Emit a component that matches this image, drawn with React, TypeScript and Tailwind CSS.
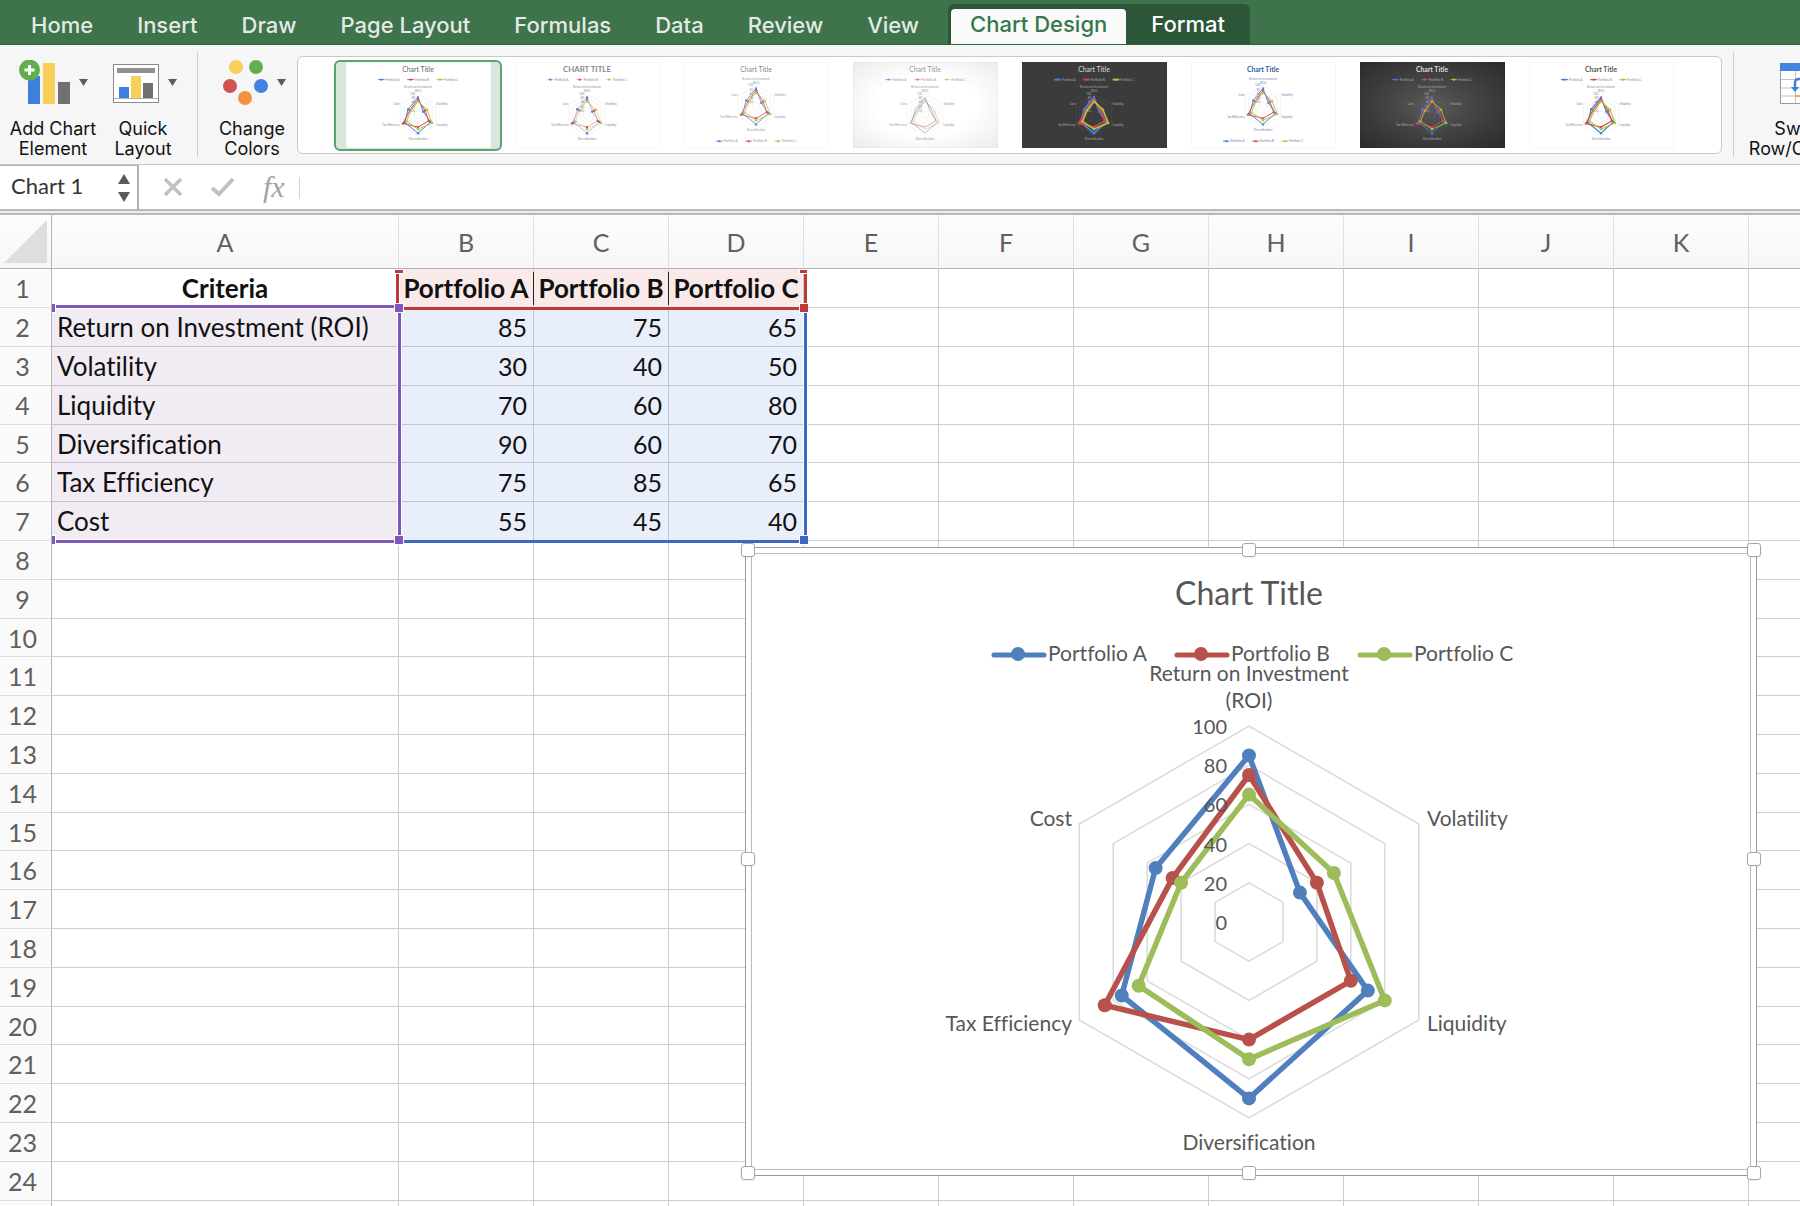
import { clsx } from 'clsx';

const TABS = ['Home', 'Insert', 'Draw', 'Page Layout', 'Formulas', 'Data', 'Review', 'View'];

const COLUMNS = ['A', 'B', 'C', 'D', 'E', 'F', 'G', 'H', 'I', 'J', 'K'];

const ROWS = Array.from({ length: 25 }, (_, i) => i + 1);

const SHEET: string[][] = [
  ['Criteria', 'Portfolio A', 'Portfolio B', 'Portfolio C'],
  ['Return on Investment (ROI)', '85', '75', '65'],
  ['Volatility', '30', '40', '50'],
  ['Liquidity', '70', '60', '80'],
  ['Diversification', '90', '60', '70'],
  ['Tax Efficiency', '75', '85', '65'],
  ['Cost', '55', '45', '40'],
];

const SERIES = [0, 1, 2].map((n) => ({
  name: SHEET[0][n + 1],
  color: ['#4f80bd', '#b8504b', '#9dbc5a'][n],
  values: SHEET.slice(1).map((row) => Number(row[n + 1])),
}));

// Points of a radar polygon, first axis straight up, then clockwise
const radarPoints = (values: number[], cx: number, cy: number, r: number) =>
  values.map((v, i) => {
    const angle = (Math.PI * 2 * i) / values.length;
    return [cx + (Math.sin(angle) * r * v) / 100, cy - (Math.cos(angle) * r * v) / 100];
  });

const toPath = (points: number[][]) => points.map((p) => p.join(',')).join(' ');

const ring = (level: number) => Array(6).fill(level) as number[];

const Caret = () => (
  <svg width="9" height="7" viewBox="0 0 9 7" className="shrink-0" aria-hidden="true">
    <path d="M0 0h9L4.500 7z" fill="#5c5c5c" />
  </svg>
);

const AddElementIcon = () => (
  <svg width="52" height="44" viewBox="0 0 52 44" aria-hidden="true">
    <rect x="9" y="16" width="12" height="28" fill="#3d80dc" />
    <rect x="24" y="3" width="12" height="41" fill="#f8cf58" />
    <rect x="39" y="22" width="12" height="22" fill="#707070" />
    <circle cx="10.500" cy="10" r="10.500" fill="#61ae4f" />
    <path d="M10.500 5v10M5.500 10h10" stroke="#fff" strokeWidth="3" />
  </svg>
);

const QuickLayoutIcon = () => (
  <svg width="47" height="44" viewBox="0 0 47 44" className="ml-1" aria-hidden="true">
    <rect x="0.500" y="4.500" width="45" height="38" fill="#fff" stroke="#8a8a8a" />
    <rect x="4" y="8" width="38" height="5" fill="#909090" />
    <path d="M1 38.500h44" stroke="#b0b0b0" />
    <rect x="6" y="27" width="10" height="11" fill="#3d80dc" />
    <rect x="18" y="16" width="10" height="22" fill="#f8cf58" />
    <rect x="30" y="23" width="10" height="15" fill="#707070" />
  </svg>
);

const ChangeColorsIcon = () => (
  <svg width="46" height="46" viewBox="0 0 46 46" className="ml-1" aria-hidden="true">
    <circle cx="13" cy="8" r="7" fill="#f8cf58" />
    <circle cx="33" cy="8" r="7" fill="#61ae4f" />
    <circle cx="7" cy="27" r="7" fill="#d35151" />
    <circle cx="38" cy="27" r="7" fill="#4384e0" />
    <circle cx="22" cy="39" r="7" fill="#f49141" />
  </svg>
);

const SwitchIcon = () => (
  <svg width="46" height="44" viewBox="0 0 46 44" aria-hidden="true">
    <rect x="0.500" y="3.500" width="45" height="40" fill="#fff" stroke="#9a9a9a" />
    <path d="M1 19.500h44M1 28h44M1 36h44M15.500 11v32M30.500 11v32" stroke="#c4c4c4" />
    <rect x="0" y="3" width="46" height="8" fill="#4384e0" />
    <path d="M15 36h16" stroke="#f49141" strokeWidth="1.500" />
    <path d="M15 29V23q0-4 4-4h8" fill="none" stroke="#3d80dc" strokeWidth="2.500" />
    <path d="M11 27h8l-4 5z" fill="#3d80dc" />
  </svg>
);

type ThumbStyle = {
  id: number;
  title?: string;
  box: string;
  text: string;
  titleColor: string;
  bold?: boolean;
  legendBottom?: boolean;
  line: number;
  dots: boolean;
  opacity: number;
};

const BRIGHT = ['#3f7fe0', '#e04545', '#b5c23c'];

const THUMBS: ThumbStyle[] = [
  { id: 1, box: 'bg-white', text: '#8a8a8a', titleColor: '#666', line: 1, dots: true, opacity: 1 },
  { id: 2, title: 'CHART TITLE', box: 'bg-white', text: '#8a8a8a', titleColor: '#888', bold: true, line: 0.4, dots: true, opacity: 1 },
  { id: 3, box: 'bg-white', text: '#999', titleColor: '#888', legendBottom: true, line: 0.8, dots: true, opacity: 0.9 },
  { id: 4, box: 'bg-radial from-white from-50% to-[#ececec]', text: '#999', titleColor: '#999', line: 0.8, dots: false, opacity: 0.6 },
  { id: 5, box: 'bg-[#3b3b3b]', text: '#aaa', titleColor: '#ddd', line: 1.8, dots: true, opacity: 1 },
  { id: 6, box: 'bg-white', text: '#7085b3', titleColor: '#35599c', bold: true, legendBottom: true, line: 1, dots: true, opacity: 0.9 },
  { id: 7, box: 'bg-radial from-[#595959] to-[#2b2b2b]', text: '#aaa', titleColor: '#ddd', bold: true, line: 0.9, dots: true, opacity: 1 },
  { id: 8, box: 'bg-white', text: '#8a8a8a', titleColor: '#555', bold: true, line: 1.2, dots: true, opacity: 1 },
];

const Thumbnail = ({ style }: { style: ThumbStyle }) => {
  const shift = style.legendBottom ? -9 : 0;
  const cy = 53 + shift;
  const legendY = style.legendBottom ? 80 : 17;

  return (
    <svg
      width="145"
      height="86"
      viewBox="0 0 145 86"
      className={clsx('border border-black/3', style.box)}
      fontFamily="Lato, sans-serif"
      fontSize="4"
      fill={style.text}
      aria-hidden="true"
    >
      <text x="72" y="9" fontSize={style.title ? 8 : 7} textAnchor="middle" fill={style.titleColor} fontWeight={style.bold ? 700 : 400}>
        {style.title ?? 'Chart Title'}
      </text>
      {SERIES.map((s, i) => (
        <g key={s.name}>
          <path d={`M${31 + i * 30} ${legendY}h7`} stroke={BRIGHT[i]} strokeWidth={style.line} opacity={style.opacity} />
          <circle cx={34.5 + i * 30} cy={legendY} r="1.200" fill={BRIGHT[i]} opacity={style.opacity} />
          <text x={39 + i * 30} y={legendY + 1} fontSize="3">{s.name}</text>
        </g>
      ))}
      <text x="72" y={26 + shift} fontSize="3" textAnchor="middle">Return on Investment</text>
      <text x="72" y={30 + shift} fontSize="3" textAnchor="middle">(ROI)</text>
      <text x="53" y={43 + shift} fontSize="3" textAnchor="end">Cost</text>
      <text x="91" y={43 + shift} fontSize="3">Volatility</text>
      <text x="53" y={65 + shift} fontSize="3" textAnchor="end">Tax Efficiency</text>
      <text x="91" y={65 + shift} fontSize="3">Liquidity</text>
      <text x="72" y={79 + shift} fontSize="3" textAnchor="middle">Diversification</text>
      {[100, 80, 60, 40, 20].map((level) => (
        <g key={level}>
          <polygon points={toPath(radarPoints(ring(level), 72, cy, 21))} fill="none" stroke={style.text} strokeWidth="0.300" opacity="0.400" />
          <text x="69" y={cy + 1 - level * 0.21} textAnchor="end" fontSize="3">{level}</text>
        </g>
      ))}
      {SERIES.map((s, i) => {
        const points = radarPoints(s.values, 72, cy, 21);
        return (
          <g key={s.name} opacity={style.opacity}>
            <polygon points={toPath(points)} fill="none" stroke={BRIGHT[i]} strokeWidth={style.line} />
            {style.dots && points.map((p, n) => <circle key={n} cx={p[0]} cy={p[1]} r="1.200" fill={BRIGHT[i]} />)}
          </g>
        );
      })}
    </svg>
  );
};

const RibbonTabs = () => (
  <nav className="flex h-[45px] shrink-0 items-end overflow-hidden border-b border-[#316340] bg-[#3e734b] pl-[9px] text-[22px] font-medium leading-[38px] text-[#e3ebe4]">
    {TABS.map((tab) => (
      <button key={tab} type="button" className="px-[22px]">
        {tab}
      </button>
    ))}
    <div className="-mb-px ml-[7px] flex h-[41px] items-end rounded-t-md bg-[#2b5637] pl-[3px]">
      <button type="button" className="h-9 rounded-t-sm bg-[#fafafa] px-[19px] pb-[6px] leading-[30px] text-[#34784b]">
        Chart Design
      </button>
      <button type="button" className="h-9 px-[25px] pb-[6px] leading-[30px] text-white">
        Format
      </button>
    </div>
  </nav>
);

const ToolButton = ({ lines, icon, className }: { lines: string[]; icon: React.ReactNode; className?: string }) => (
  <button type="button" className={clsx('flex shrink-0 flex-col items-center gap-[15px] text-[18px] leading-5 text-[#111]', className)}>
    <span className="flex h-11 items-center gap-2">{icon}</span>
    <span>
      {lines[0]}
      <br />
      {lines[1]}
    </span>
  </button>
);

const Toolbar = () => (
  <div className="flex h-[120px] shrink-0 items-start overflow-hidden border-b border-[#c6c6c6] bg-[#f6f6f6] pl-2 pt-[15px]">
    <ToolButton className="w-[90px]" lines={['Add Chart', 'Element']} icon={<><AddElementIcon /><Caret /></>} />
    <ToolButton className="w-[90px]" lines={['Quick', 'Layout']} icon={<><QuickLayoutIcon /><Caret /></>} />
    <div className="-mt-2 mx-[9px] h-[105px] w-px shrink-0 bg-[#cfcfcf]" />
    <ToolButton className="w-[90px]" lines={['Change', 'Colors']} icon={<><ChangeColorsIcon /><Caret /></>} />
    <div className="-mt-1 flex h-[98px] min-w-0 flex-1 items-center gap-px overflow-hidden rounded-md border border-[#c9c9c9] bg-white pl-[36px]">
      {THUMBS.map((style, i) => (
        <button
          key={style.id}
          type="button"
          aria-label={`Chart style ${style.id}`}
          className={clsx(
            'flex h-[91px] w-[168px] shrink-0 items-center justify-center rounded-md border-2',
            i === 0 ? 'border-[#5aa26e] bg-[#d8e6dc]' : 'border-transparent',
          )}
        >
          <Thumbnail style={style} />
        </button>
      ))}
    </div>
    <div className="-mt-2 ml-[11px] h-[105px] w-px shrink-0 bg-[#cfcfcf]" />
    <div className="w-[66px] shrink-0 overflow-hidden pl-4">
      <ToolButton className="w-[106px]" lines={['Switch', 'Row/Column']} icon={<SwitchIcon />} />
    </div>
  </div>
);

const FormulaBar = () => (
  <div className="flex h-[44px] shrink-0 items-stretch bg-white">
    <div className="flex w-[139px] shrink-0 items-center border-r-2 border-t border-[#b0b0b0] pr-[7px]">
      <input
        aria-label="Name box"
        defaultValue="Chart 1"
        className="min-w-0 flex-1 bg-transparent pb-1 pl-[11px] font-[Lato,sans-serif] text-[22px] leading-7 text-[#333] outline-none"
      />
      <div className="flex flex-col gap-2">
        <button type="button" aria-label="Previous name">
          <svg width="12" height="10" viewBox="0 0 12 10" className="block"><path d="M6 0l6 10H0z" fill="#5a5a5a" /></svg>
        </button>
        <button type="button" aria-label="Next name">
          <svg width="12" height="10" viewBox="0 0 12 10" className="block"><path d="M0 0h12L6 10z" fill="#5a5a5a" /></svg>
        </button>
      </div>
    </div>
    <div className="flex items-center gap-7 pl-6 text-[#c1c1c1]">
      <button type="button" aria-label="Cancel">
        <svg width="20" height="18" viewBox="0 0 20 18" className="block"><path d="M2 1l16 16M18 1L2 17" stroke="currentColor" strokeWidth="3.500" /></svg>
      </button>
      <button type="button" aria-label="Enter">
        <svg width="24" height="20" viewBox="0 0 24 20" className="block"><path d="M1 11l7 6L22 2" fill="none" stroke="currentColor" strokeWidth="4" /></svg>
      </button>
      <button type="button" aria-label="Insert function" className="font-[Liberation_Serif,serif] text-[30px] italic leading-8 text-[#a3a3a3]">
        fx
      </button>
    </div>
    <div className="ml-[14px] mt-3 h-[22px] w-px bg-[#d4d4d4]" />
    <input aria-label="Formula" className="min-w-0 flex-1 bg-transparent px-3 text-[22px] outline-none" />
  </div>
);

// Small square grips at the corners of the highlighted ranges
const Grip = ({ className }: { className: string }) => (
  <span className={clsx('absolute size-[10px] border border-white', className)} />
);

const RangeOutlines = () => (
  <div className="pointer-events-none absolute left-[52px] top-[54px] h-[276px] w-[756px] overflow-hidden">
    <span className="absolute left-[481px] top-[3px] h-[33px] w-px bg-[#222]" />
    <span className="absolute left-[616px] top-[3px] h-[33px] w-px bg-[#222]" />

    <span className="absolute left-0 top-[35px] h-[5px] w-[348px] border-y border-white bg-[#7e57b8]" />
    <span className="absolute left-0 top-[270px] h-[4px] w-[348px] border-t border-white bg-[#7e57b8]" />
    <span className="absolute left-[345px] top-[40px] h-[232px] w-[5px] border-x border-white bg-[#7e57b8]" />

    <span className="absolute left-[344px] top-[2px] h-[34px] w-[4px] border-r border-white bg-[#b93b3d]" />
    <span className="absolute left-[752px] top-[2px] h-[34px] w-[4px] border-r border-white bg-[#b93b3d]" />
    <span className="absolute left-[350px] top-[38px] h-[3px] w-[402px] bg-[#b93b3d]" />

    <span className="absolute left-[350px] top-[271px] h-[3px] w-[402px] bg-[#3c68c3]" />
    <span className="absolute left-[751px] top-[42px] h-[228px] w-[5px] border-x border-white bg-[#3c68c3]" />

    <span className="absolute left-[342px] top-0 h-[5px] w-[10px] border border-white bg-[#b93b3d]" />
    <span className="absolute left-[747px] top-0 h-[5px] w-[9px] border border-white bg-[#b93b3d]" />
    <Grip className="-left-[6px] top-[34px] bg-[#7e57b8]" />
    <Grip className="-left-[6px] top-[266px] bg-[#7e57b8]" />
    <Grip className="left-[342px] top-[34px] bg-[#7e57b8]" />
    <Grip className="left-[342px] top-[266px] bg-[#7e57b8]" />
    <Grip className="left-[747px] top-[34px] bg-[#b93b3d]" />
    <Grip className="left-[747px] top-[266px] bg-[#3c68c3]" />
  </div>
);

const cellStyle = (row: number, col: number) => {
  if (row > 7 || col > 3) return 'border-[#cecece]';
  if (row === 1) return clsx('border-[#cecece] text-center text-[26px] font-bold', col > 0 && 'bg-[#f9e9e8]');
  return col === 0
    ? 'border-[#c6c0ca] bg-[#f1ebf4] pl-[5px] text-left text-[26px]'
    : 'border-[#c0c5d2] bg-[#e8eefa] pr-[6px] text-right';
};

const Spreadsheet = () => (
  <table className="w-full table-fixed border-separate border-spacing-0 font-[Lato,sans-serif] text-[25px] leading-7 text-[#111] [font-variant-ligatures:none]">
    <colgroup>
      <col className="w-[52px]" />
      {COLUMNS.map((c) => (
        <col key={c} className={c === 'A' ? 'w-[347px]' : 'w-[135px]'} />
      ))}
      <col />
    </colgroup>
    <thead>
      <tr className="h-[54px] bg-linear-to-b from-[#fdfdfd] to-[#f6f6f6] text-[#606060]">
        <th className="border-b border-r border-[#b4b4b4] p-0">
          <svg width="43" height="43" viewBox="0 0 43 43" className="ml-1 block" aria-hidden="true">
            <path d="M43 0v43H0z" fill="#dedede" />
          </svg>
        </th>
        {COLUMNS.map((c) => (
          <th key={c} scope="col" className="border-b border-r border-b-[#b4b4b4] border-r-[#e0e0e0] p-0 font-normal">
            {c}
          </th>
        ))}
        <th className="border-b border-[#b4b4b4]" />
      </tr>
    </thead>
    <tbody>
      {ROWS.map((row) => (
        <tr key={row} className="h-[39px] nth-[5n]:h-[38px]">
          <th scope="row" className="border-b border-r border-b-[#dcdcdc] border-r-[#b4b4b4] bg-[#fafafa] p-0 pr-[6px] font-normal text-[#606060]">
            {row}
          </th>
          {COLUMNS.map((c, col) => (
            <td key={c} className={clsx('whitespace-nowrap border-b border-r p-0', cellStyle(row, col))}>
              {SHEET[row - 1]?.[col]}
            </td>
          ))}
          <td className="border-b border-[#cecece]" />
        </tr>
      ))}
    </tbody>
  </table>
);

const HANDLES = [
  '-left-[5px] -top-[5px]',
  'left-[496px] -top-[5px]',
  '-right-[5px] -top-[5px]',
  '-left-[5px] top-[304px]',
  '-right-[5px] top-[304px]',
  '-left-[5px] -bottom-[5px]',
  'left-[496px] -bottom-[5px]',
  '-right-[5px] -bottom-[5px]',
];

const RadarChart = () => {
  const cx = 504;
  const cy = 375;
  const r = 196;

  return (
    <section aria-label="Chart 1" className="absolute left-[745px] top-[332px] h-[629px] w-[1012px] border border-[#9a9a9a] bg-white p-[5px]">
      <div className="size-full border border-[#bcbcbc]" />
      <svg
        viewBox="0 0 1012 629"
        className="absolute -left-px -top-px h-[629px] w-[1012px] [font-variant-ligatures:none]"
        fontFamily="Lato, sans-serif"
        fontSize="21"
        fill="#575757"
      >
        <text x={cx} y="58" fontSize="32" textAnchor="middle">Chart Title</text>
        {[20, 40, 60, 80, 100].map((level) => (
          <polygon key={level} points={toPath(radarPoints(ring(level), cx, cy, r))} fill="none" stroke="#dadada" strokeWidth="1.500" />
        ))}
        {SERIES.map((s, i) => {
          const points = radarPoints(s.values, cx, cy, r);
          const x = 249 + i * 183;
          return (
            <g key={s.name} fill={s.color} stroke={s.color}>
              <polygon points={toPath(points)} fill="none" strokeWidth="5.500" strokeLinejoin="round" />
              {points.map((p, n) => (
                <circle key={n} cx={p[0]} cy={p[1]} r="7" stroke="none" />
              ))}
              <path d={`M${x} 108h50`} strokeWidth="5" strokeLinecap="round" />
              <circle cx={x + 24} cy="107" r="7" stroke="none" />
              <text x={x + 54} y="114" fill="#575757" stroke="none">{s.name}</text>
            </g>
          );
        })}
        {[0, 20, 40, 60, 80, 100].map((level) => (
          <text key={level} x="482" y={cy + 8 - (r * level) / 100} fontSize="20" textAnchor="end">{level}</text>
        ))}
        <text x={cx} y="134" textAnchor="middle">Return on Investment</text>
        <text x={cx} y="161" textAnchor="middle">(ROI)</text>
        <text x="682" y="279">Volatility</text>
        <text x="682" y="484">Liquidity</text>
        <text x={cx} y="603" textAnchor="middle">Diversification</text>
        <text x="327" y="484" textAnchor="end">Tax Efficiency</text>
        <text x="327" y="279" textAnchor="end">Cost</text>
      </svg>
      {HANDLES.map((h) => (
        <span key={h} className={clsx('absolute size-[14px] rounded-[3px] border border-[#a6a6a6] bg-white shadow-xs', h)} />
      ))}
    </section>
  );
};

const App = () => {
  return (
    <div className="flex h-screen flex-col overflow-hidden bg-white font-[Inter,sans-serif]">
      <RibbonTabs />
      <Toolbar />
      <FormulaBar />
      <div className="h-[6px] shrink-0 border-y-2 border-[#b8b8b8] bg-[#ececec]" />
      <main className="relative min-h-0 flex-1 overflow-hidden">
        <Spreadsheet />
        <RangeOutlines />
        <RadarChart />
      </main>
    </div>
  );
};

export default App;
